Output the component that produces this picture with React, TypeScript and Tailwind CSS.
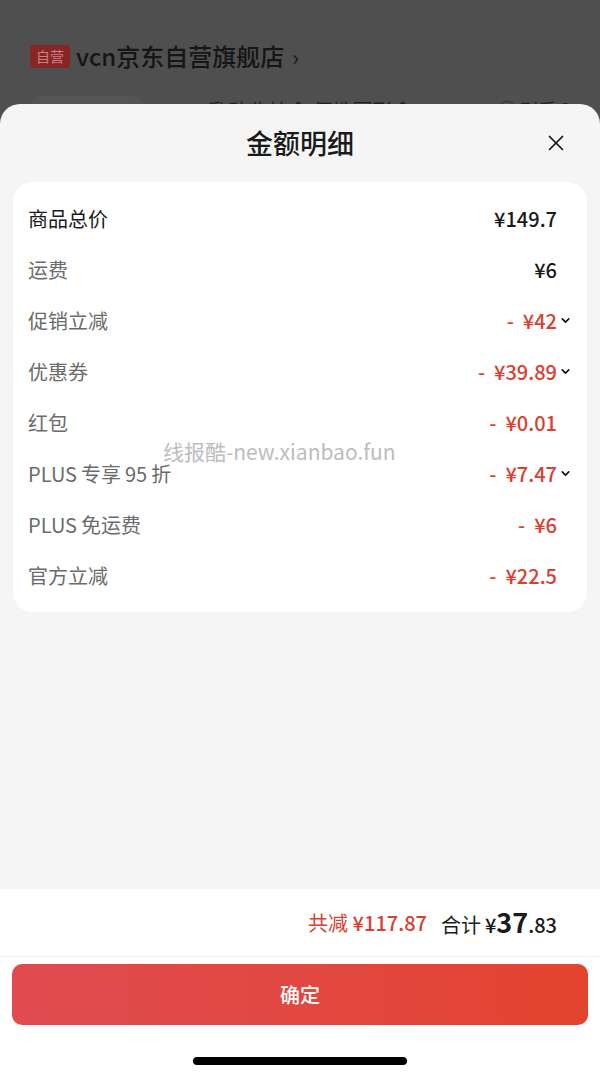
import { X, ChevronDown } from "lucide-react"

const font = { fontFamily: '"Noto Sans CJK SC", "Noto Sans", sans-serif' }

type Row = {
  label: string
  amount: string
  minus?: boolean
  dark?: boolean
  more?: boolean
}

const rows: Row[] = [
  { label: "商品总价", amount: "¥149.7", dark: true },
  { label: "运费", amount: "¥6" },
  { label: "促销立减", amount: "¥42", minus: true, more: true },
  { label: "优惠券", amount: "¥39.89", minus: true, more: true },
  { label: "红包", amount: "¥0.01", minus: true },
  { label: "PLUS\u2009专享\u200995\u2009折", amount: "¥7.47", minus: true, more: true },
  { label: "PLUS\u2009免运费", amount: "¥6", minus: true },
  { label: "官方立减", amount: "¥22.5", minus: true },
]

const DetailRow = ({ row }: { row: Row }) => (
  <div className="flex h-[51px] items-center pl-[15px]">
    <span
      className={
        row.dark
          ? "flex-1 text-[20px] text-[#1a1a1a]"
          : "flex-1 text-[20px] text-[#6b6b6b]"
      }
    >
      {row.label}
    </span>
    <span
      className={
        row.minus
          ? "flex items-center gap-[9px] text-[20px] font-medium text-[#d9402f]"
          : "flex items-center text-[20px] font-medium text-[#1a1a1a]"
      }
    >
      {row.minus && <span>-</span>}
      <span>{row.amount}</span>
    </span>
    <span className="flex w-[30px] items-center pl-[2px]">
      {row.more && (
        <ChevronDown className="h-[13px] w-[13px] text-[#111]" strokeWidth={3} />
      )}
    </span>
  </div>
)

export default function App() {
  return (
    <div className="relative h-[1077px] w-[600px] overflow-hidden bg-[#4f4f4f]" style={font}>
      {/* dimmed page behind */}
      <div className="flex flex-col px-[30px] pt-[38px]">
        <div className="flex items-center gap-[6px]">
          <span className="flex h-[23px] w-[40px] items-center justify-center rounded-[4px] bg-[#8a2525] text-[14px] text-[#c98080]">
            自营
          </span>
          <span className="text-[24px] font-medium text-[#161616]">vcn京东自营旗舰店</span>
          <span className="ml-[2px] text-[22px] text-[#161616]">›</span>
        </div>
        <div className="mt-[22px] flex items-start">
          <div className="h-[40px] w-[115px] rounded-[12px] bg-[#555] pl-[12px] pt-[4px] text-[14px] text-[#222]">
            ¥\
          </div>
          <span className="ml-[63px] text-[20px] text-[#222]">乳贴收纳盒 便携圆形盒</span>
          <span className="ml-auto text-[18px] text-[#222]">◯ 刊乐 8</span>
        </div>
      </div>

      {/* bottom sheet */}
      <div className="absolute left-0 right-0 top-[104px] flex h-[973px] flex-col rounded-t-[20px] bg-[#f5f5f5]">
        <div className="relative flex h-[78px] items-center justify-center">
          <span className="text-[27px] font-medium text-[#1a1a1a]">金额明细</span>
          <X className="absolute right-[31px] top-[26px] h-[26px] w-[26px] text-[#1a1a1a]" strokeWidth={1.6} />
        </div>

        <div className="mx-[13px] rounded-[20px] bg-white py-[11px]">
          {rows.map((r) => (
            <DetailRow key={r.label} row={r} />
          ))}
        </div>

        <div className="flex-1" />

        <div className="flex flex-col bg-white">
          <div className="flex h-[68px] items-center justify-end gap-[14px] border-b border-[#f0f0f0] pr-[43px]">
            <span className="text-[20px] text-[#d9402f]">
              共减 <span className="font-medium">¥117.87</span>
            </span>
            <span className="flex items-baseline text-[20px] text-[#1a1a1a]">
              合计 <span className="ml-[4px] font-medium">¥</span>
              <span className="text-[27px] font-bold">37</span>
              <span className="font-medium">.83</span>
            </span>
          </div>
          <button className="mx-[12px] mt-[7px] flex h-[61px] items-center justify-center rounded-[10px] bg-gradient-to-r from-[#e14b50] to-[#e3442e] text-[20px] font-medium text-white">
            确定
          </button>
          <div className="flex h-[52px] items-center justify-center">
            <span className="mt-[20px] h-[8px] w-[214px] rounded-full bg-black" />
          </div>
        </div>
      </div>

      {/* watermark */}
      <span className="absolute left-[163px] top-[436px] text-[21px] text-[#bdbdbd]">
        线报酷-new.xianbao.fun
      </span>
    </div>
  )
}
